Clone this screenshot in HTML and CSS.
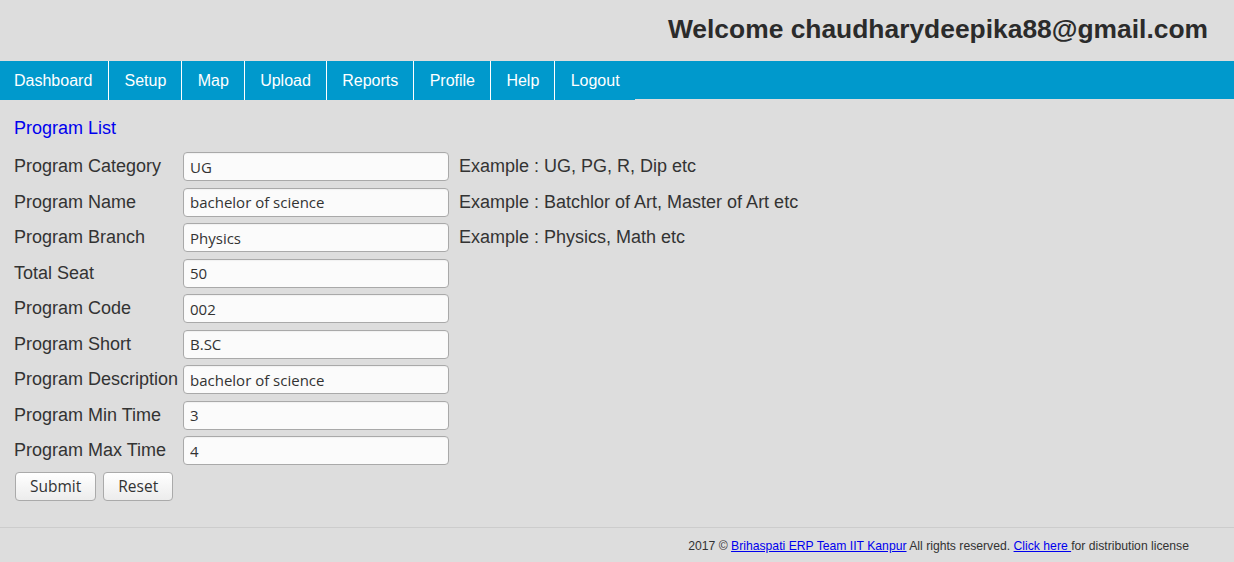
FILE: index.html
```html
<!DOCTYPE html>
<html>
<head>
<meta charset="utf-8">
<link rel="stylesheet" href="styles.css">
</head>
<body>
<header class="top">
  <h1 class="welcome">Welcome chaudharydeepika88@gmail.com</h1>
</header>
<nav class="menu">
  <ul class="menu-list">
    <li class="menu-item">Dashboard</li>
    <li class="menu-item">Setup</li>
    <li class="menu-item">Map</li>
    <li class="menu-item">Upload</li>
    <li class="menu-item">Reports</li>
    <li class="menu-item">Profile</li>
    <li class="menu-item">Help</li>
    <li class="menu-item last">Logout</li>
  </ul>
</nav>
<main class="content">
  <div class="page-title">Program List</div>
  <form class="form">
    <label class="label">Program Category</label>
    <input class="field" type="text" value="UG">
    <span class="hint">Example : UG, PG, R, Dip etc</span>

    <label class="label">Program Name</label>
    <input class="field" type="text" value="bachelor of science">
    <span class="hint">Example : Batchlor of Art, Master of Art etc</span>

    <label class="label">Program Branch</label>
    <input class="field" type="text" value="Physics">
    <span class="hint">Example : Physics, Math etc</span>

    <label class="label">Total Seat</label>
    <input class="field" type="text" value="50">
    <span class="hint"></span>

    <label class="label">Program Code</label>
    <input class="field" type="text" value="002">
    <span class="hint"></span>

    <label class="label">Program Short</label>
    <input class="field" type="text" value="B.SC">
    <span class="hint"></span>

    <label class="label">Program Description</label>
    <input class="field" type="text" value="bachelor of science">
    <span class="hint"></span>

    <label class="label">Program Min Time</label>
    <input class="field" type="text" value="3">
    <span class="hint"></span>

    <label class="label">Program Max Time</label>
    <input class="field" type="text" value="4">
    <span class="hint"></span>

    <div class="buttons">
      <button class="btn" type="button">Submit</button>
      <button class="btn" type="button">Reset</button>
    </div>
  </form>
</main>
<footer class="footer">
  2017 © <a class="link" href="#">Brihaspati ERP Team IIT Kanpur</a> All rights reserved. <a class="link" href="#">Click here </a>for distribution license
</footer>
</body>
</html>
```

FILE: styles.css
```css
html, body {
  margin: 0;
  padding: 0;
  background: #dddddd;
  font-family: "Liberation Sans", Arial, sans-serif;
  color: #333333;
}

.top {
  height: 61px;
  display: flex;
  justify-content: flex-end;
  align-items: center;
  padding-right: 26px;
  padding-bottom: 2px;
  box-sizing: border-box;
}

.welcome {
  margin: 0;
  font-size: 26.4px;
  font-weight: bold;
  color: #2b2b2b;
}

.menu {
  background: #0099cc;
  height: 38px;
}

.menu-list {
  list-style: none;
  margin: 0;
  padding: 0;
  display: flex;
  height: 39px;
}

.menu-item {
  background: #0099cc;
  color: #ffffff;
  font-size: 16px;
  line-height: 39px;
  padding: 0 15.2px;
  border-right: 1px solid #ffffff;
  height: 38px;
  padding-bottom: 1px;
}

.menu-item:first-child {
  padding-left: 14px;
  padding-right: 16px;
}

.menu-item.last {
  border-right: none;
  padding-right: 15.4px;
}

.content {
  padding: 18px 14px 0 14px;
  height: 429px;
  box-sizing: border-box;
  border-bottom: 1px solid #cccccc;
}

.page-title {
  color: #0000ee;
  font-size: 18px;
  line-height: 22px;
  margin-bottom: 13px;
}

.form {
  display: grid;
  grid-template-columns: 169px 266px max-content;
  column-gap: 0;
  row-gap: 6.5px;
  align-items: center;
}

.label {
  font-size: 18px;
  white-space: nowrap;
}

.field {
  box-sizing: border-box;
  width: 266px;
  height: 29px;
  border: 1px solid #a9a9a9;
  border-radius: 4px;
  background: #fbfbfb;
  font-family: "Open Sans", "DejaVu Sans", sans-serif;
  font-size: 15px;
  color: #333333;
  padding: 0 6px;
  margin: 0;
  box-shadow: inset 0 1px 1px rgba(0,0,0,0.04);
}

.hint {
  font-size: 18px;
  padding-left: 10px;
  white-space: nowrap;
}

.buttons {
  grid-column: 1 / 4;
  display: flex;
  gap: 7px;
  padding-left: 1px;
  margin-top: 0;
}

.btn {
  height: 29px;
  border: 1px solid #aaaaaa;
  border-radius: 4px;
  background: linear-gradient(#ffffff, #ececec);
  font-family: "Open Sans", "DejaVu Sans", sans-serif;
  font-size: 15.5px;
  color: #333333;
  padding: 0 14px;
}

.footer {
  text-align: right;
  padding-right: 45px;
  font-size: 12.2px;
  line-height: 14px;
  padding-top: 11px;
  color: #333333;
}

.link {
  color: #0000ee;
  text-decoration: underline;
}
```
